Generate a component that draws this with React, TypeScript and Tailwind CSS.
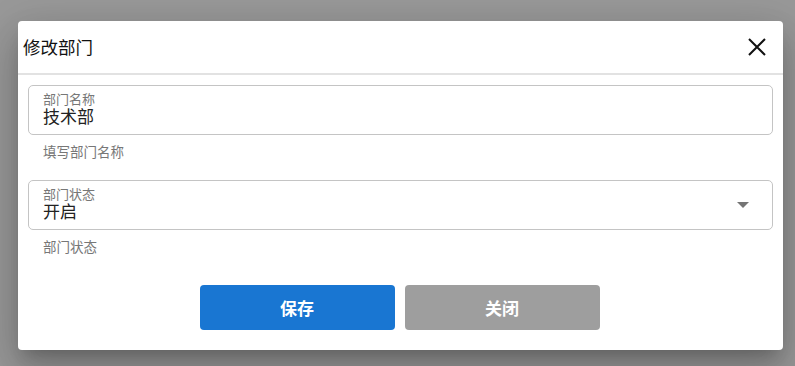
export default function App() {
  const font = { fontFamily: '"Noto Sans CJK SC", "Noto Sans", sans-serif' };
  return (
    <div className="w-screen h-screen bg-[#999999] pl-[18px] pt-[21px] overflow-hidden" style={font}>
      <div className="w-[765px] bg-white rounded-[4px] shadow-[0_11px_15px_-7px_rgba(0,0,0,0.2),0_24px_38px_3px_rgba(0,0,0,0.14),0_9px_46px_8px_rgba(0,0,0,0.12)]">
        <div className="h-[52px] flex items-center justify-between pl-[5px] pr-[17px]">
          <h2 className="text-[17.5px] leading-[20px] text-[#111]">修改部门</h2>
          <button type="button" className="w-[18px] h-[18px] flex items-center justify-center">
            <svg width="18" height="18" viewBox="0 0 18 18" fill="none" stroke="#111" strokeWidth="2">
              <path d="M1 1L17 17M17 1L1 17" />
            </svg>
          </button>
        </div>
        <div className="h-[2px] bg-[#e2e2e2]"></div>
        <div className="px-[10px] pt-[10px] pb-[20px]">
          <div className="h-[50px] border border-[#c4c4c4] rounded-[5px] px-[14px] pt-[5px]">
            <div className="text-[13px] leading-[15px] text-[#777]">部门名称</div>
            <div className="text-[17px] leading-[20px] text-[#222]">技术部</div>
          </div>
          <div className="mt-[8px] px-[15px] text-[13.5px] leading-[16px] text-[#777]">填写部门名称</div>

          <div className="mt-[21px] h-[50px] border border-[#c4c4c4] rounded-[5px] pl-[14px] pr-[23px] pt-[5px] flex items-start justify-between">
            <div>
              <div className="text-[13px] leading-[15px] text-[#777]">部门状态</div>
              <div className="text-[17px] leading-[20px] text-[#222]">开启</div>
            </div>
            <svg width="12" height="6" viewBox="0 0 12 6" className="mt-[16px]">
              <path d="M0 0H12L6 6Z" fill="#757575" />
            </svg>
          </div>
          <div className="mt-[8px] px-[15px] text-[13.5px] leading-[16px] text-[#777]">部门状态</div>

          <div className="mt-[31px] flex justify-center gap-[10px] pr-[2px]">
            <button type="button" className="w-[195px] h-[45px] rounded-[4px] bg-[#1976d2] text-white text-[17px] font-bold">保存</button>
            <button type="button" className="w-[195px] h-[45px] rounded-[4px] bg-[#9e9e9e] text-white text-[17px] font-bold">关闭</button>
          </div>
        </div>
      </div>
    </div>
  );
}
